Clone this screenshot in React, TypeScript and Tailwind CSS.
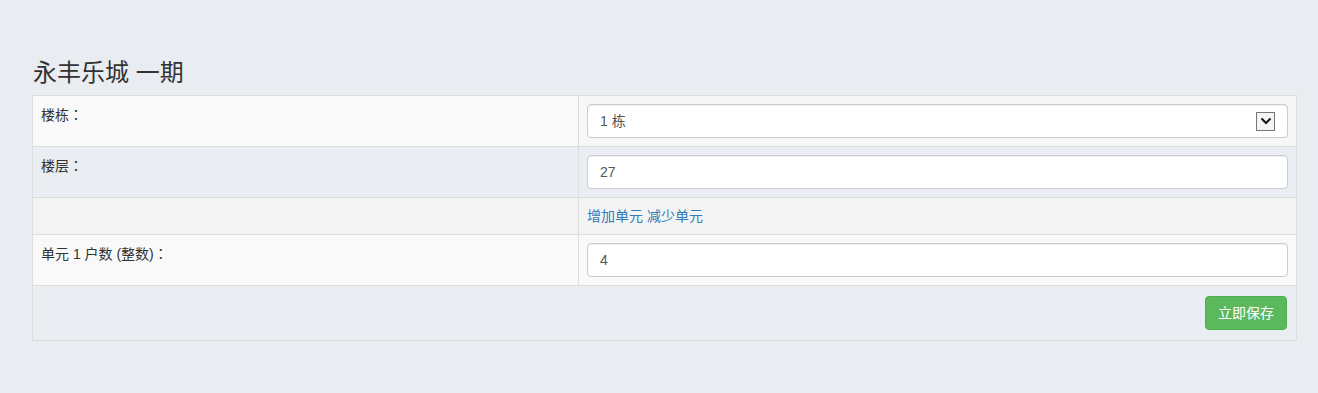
import { useState } from "react";

const font = {
  fontFamily: '"Liberation Sans", "Noto Sans CJK SC", sans-serif',
};

function Label({ text }: { text: string }) {
  return (
    <div className="px-2 pt-2 pb-2 text-sm leading-5 text-[#333] border-r border-[#ddd]">
      {text}
      <span style={{ fontFamily: '"Noto Sans CJK JP", sans-serif' }}>：</span>
    </div>
  );
}

export default function App() {
  const [floors, setFloors] = useState("27");
  const [units, setUnits] = useState(["4"]);

  return (
    <div
      className="min-h-[393px] bg-[#e9ecf0] pl-8 pr-[21px] pt-[59px]"
      style={font}
    >
      <h3 className="text-[24px] leading-[27px] text-[#333] mb-[9px] pl-px">
        永丰乐城 一期
      </h3>

      <div className="border border-[#ddd] text-[13px]">
        {/* 楼栋 */}
        <div className="grid grid-cols-[546px_1fr] bg-[#f9f9f9]">
          <Label text="楼栋" />
          <div className="p-2 bg-[#f7f7f7]">
            <div className="flex items-center justify-between h-[34px] bg-white border border-[#ccc] rounded px-3 shadow-[inset_0_1px_1px_rgba(0,0,0,0.075)]">
              <span className="text-sm text-[#555]">1 栋</span>
              <span className="flex items-center justify-center w-[19px] h-[19px] border border-[#777] bg-[#f4f4f4]">
                <svg width="12" height="8" viewBox="0 0 12 8">
                  <path
                    d="M1.5 1.5 L6 6 L10.5 1.5"
                    fill="none"
                    stroke="#111"
                    strokeWidth="2"
                  />
                </svg>
              </span>
            </div>
          </div>
        </div>

        {/* 楼层 */}
        <div className="grid grid-cols-[546px_1fr] bg-[#eaedf1] border-t border-[#ddd]">
          <Label text="楼层" />
          <div className="p-2">
            <input
              value={floors}
              onChange={(e) => setFloors(e.target.value)}
              className="w-full h-[34px] bg-white border border-[#ccc] rounded px-3 text-sm text-[#555] outline-none shadow-[inset_0_1px_1px_rgba(0,0,0,0.075)]"
            />
          </div>
        </div>

        {/* 增减单元 */}
        <div className="grid grid-cols-[546px_1fr] bg-[#f4f4f4] border-t border-[#ddd]">
          <div className="border-r border-[#ddd]" />
          <div className="p-2 leading-5 text-sm text-[#337ab7]">
            <button onClick={() => setUnits([...units, "4"])}>增加单元</button>{" "}
            <button onClick={() => units.length > 1 && setUnits(units.slice(0, -1))}>
              减少单元
            </button>
          </div>
        </div>

        {units.map((u, i) => (
          <div
            key={i}
            className="grid grid-cols-[546px_1fr] bg-[#f9f9f9] border-t border-[#ddd]"
          >
            <Label text={`单元 ${i + 1} 户数 (整数)`} />
            <div className="p-2">
              <input
                value={u}
                onChange={(e) =>
                  setUnits(units.map((x, j) => (j === i ? e.target.value : x)))
                }
                className="w-full h-[34px] bg-white border border-[#ccc] rounded px-3 text-sm text-[#555] outline-none shadow-[inset_0_1px_1px_rgba(0,0,0,0.075)]"
              />
            </div>
          </div>
        ))}

        {/* 保存 */}
        <div className="flex justify-end bg-[#eaedf1] border-t border-[#ddd] px-[9px] py-[10px]">
          <button className="h-[34px] px-3 rounded bg-[#5cb85c] border border-[#4cae4c] text-white text-sm">
            立即保存
          </button>
        </div>
      </div>
    </div>
  );
}
